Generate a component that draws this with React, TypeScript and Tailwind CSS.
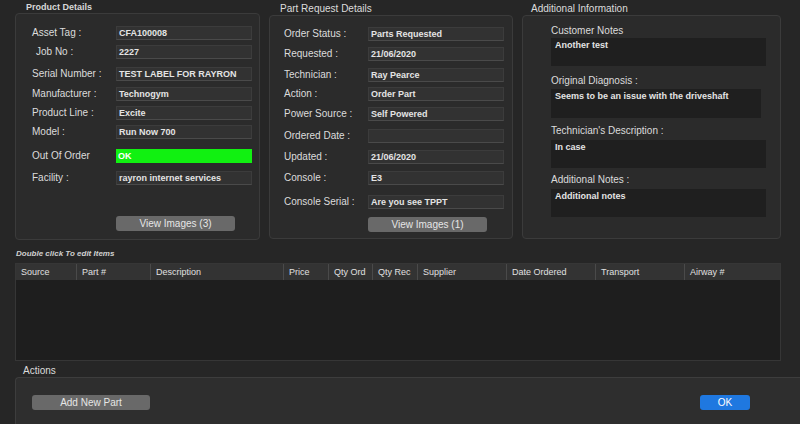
import React from "react";

type Row = { label: string; value: string; gap: string; indent?: boolean; green?: boolean };

const productRows: Row[] = [
  { label: "Asset Tag :", value: "CFA100008", gap: "mt-[12px]" },
  { label: "Job No :", value: "2227", gap: "mt-[5px]", indent: true },
  { label: "Serial Number :", value: "TEST LABEL FOR RAYRON", gap: "mt-[8px]" },
  { label: "Manufacturer :", value: "Technogym", gap: "mt-[6px]" },
  { label: "Product Line :", value: "Excite", gap: "mt-[5px]" },
  { label: "Model :", value: "Run Now 700", gap: "mt-[5px]" },
  { label: "Out Of Order", value: "OK", gap: "mt-[10px]", green: true },
  { label: "Facility :", value: "rayron internet services", gap: "mt-[8px]" },
];

const partRows: Row[] = [
  { label: "Order Status :", value: "Parts Requested", gap: "mt-[11px]" },
  { label: "Requested :", value: "21/06/2020", gap: "mt-[6px]" },
  { label: "Technician :", value: "Ray Pearce", gap: "mt-[7px]" },
  { label: "Action :", value: "Order Part", gap: "mt-[5px]" },
  { label: "Power Source :", value: "Self Powered", gap: "mt-[6px]" },
  { label: "Ordered Date :", value: "", gap: "mt-[8px]" },
  { label: "Updated :", value: "21/06/2020", gap: "mt-[7px]" },
  { label: "Console :", value: "E3", gap: "mt-[7px]" },
  { label: "Console Serial :", value: "Are you see TPPT", gap: "mt-[10px]" },
];

// gap above label, space between label and box, box size
const notes = [
  { label: "Customer Notes", value: "Another test", gap: "mt-[8px]", inner: "mt-[1px]", box: "w-[215px] h-[28px]" },
  { label: "Original Diagnosis :", value: "Seems to be an issue with the driveshaft", gap: "mt-[8px]", inner: "mt-[2px]", box: "w-[210px] h-[29px]" },
  { label: "Technician's Description :", value: "In case", gap: "mt-[6px]", inner: "mt-[3px]", box: "w-[215px] h-[28px]" },
  { label: "Additional Notes :", value: "Additional notes", gap: "mt-[5px]", inner: "mt-[3px]", box: "w-[215px] h-[28px]" },
];

const columns = [
  { name: "Source", w: "w-[61px]" },
  { name: "Part #", w: "w-[74px]" },
  { name: "Description", w: "w-[133px]" },
  { name: "Price", w: "w-[45px]" },
  { name: "Qty Ord", w: "w-[44px]" },
  { name: "Qty Rec", w: "w-[45px]" },
  { name: "Supplier", w: "w-[89px]" },
  { name: "Date Ordered", w: "w-[89px]" },
  { name: "Transport", w: "w-[89px]" },
  { name: "Airway #", w: "flex-1" },
];

const Field: React.FC<{ row: Row; labelW: string }> = ({ row, labelW }) => (
  <div className={`flex items-center h-[14px] ${row.gap}`}>
    <div className={`${labelW} shrink-0 text-[10px] text-[#dcdcdc] leading-none ${row.indent ? "pl-[4px]" : ""}`}>
      {row.label}
    </div>
    <div
      className={`w-[136px] h-[14px] px-[2px] flex items-center text-[9px] font-semibold leading-none ${
        row.green
          ? "bg-[#11f111] text-white"
          : "bg-[#323232] text-[#e4e4e4] border border-[#3c3c3c] border-b-[#4a4a4a]"
      }`}
    >
      {row.value}
    </div>
  </div>
);

const GrayButton: React.FC<{ label: string; w: string; className?: string }> = ({ label, w, className }) => (
  <button className={`${w} h-[15px] rounded-[3px] bg-[#696969] text-[10px] text-[#e6e6e6] leading-none ${className ?? ""}`}>
    {label}
  </button>
);

export default function App() {
  return (
    <div className="w-[800px] h-[424px] bg-[#262626] overflow-hidden font-['Liberation_Sans',Arial,sans-serif] flex flex-col">
      <div className="flex h-[240px] shrink-0">
        {/* Product Details */}
        <div className="ml-[15px] w-[245px] flex flex-col">
          <div className="h-[13px] pl-[11px] pt-[3px] text-[9px] font-semibold text-[#d8d8d8] leading-none">Product Details</div>
          <div className="h-[227px] bg-[#2b2b2b] border border-[#3b3b3b] rounded-[4px] pl-[16px] flex flex-col">
            {productRows.map((r) => (
              <Field key={r.label} row={r} labelW="w-[84px]" />
            ))}
            <GrayButton label="View Images (3)" w="w-[119px]" className="mt-[31px] ml-[84px]" />
          </div>
        </div>

        {/* Part Request Details */}
        <div className="ml-[9px] w-[244px] flex flex-col">
          <div className="h-[15px] pl-[11px] pt-[4px] text-[10px] text-[#dcdcdc] leading-none">Part Request Details</div>
          <div className="h-[224px] bg-[#2b2b2b] border border-[#3b3b3b] rounded-[4px] pl-[14px] flex flex-col">
            {partRows.map((r) => (
              <Field key={r.label} row={r} labelW="w-[84px]" />
            ))}
            <GrayButton label="View Images (1)" w="w-[119px]" className="mt-[8px] ml-[84px]" />
          </div>
        </div>

        {/* Additional Information */}
        <div className="ml-[9px] w-[259px] flex flex-col">
          <div className="h-[15px] pl-[9px] pt-[4px] text-[10px] text-[#dcdcdc] leading-none">Additional Information</div>
          <div className="h-[224px] bg-[#2b2b2b] border border-[#3b3b3b] rounded-[4px] pl-[28px] flex flex-col">
            {notes.map((n) => (
              <div key={n.label} className={`flex flex-col ${n.gap}`}>
                <div className="h-[13px] text-[10px] text-[#dcdcdc] leading-[13px]">{n.label}</div>
                <div className={`${n.box} ${n.inner} bg-[#1f1f1f] px-[4px] pt-[3px] text-[9px] font-semibold text-[#e4e4e4] leading-none`}>
                  {n.value}
                </div>
              </div>
            ))}
          </div>
        </div>
      </div>

      {/* Items table */}
      <div className="h-[23px] pl-[16px] pt-[10px] text-[8px] italic font-bold text-[#d0d0d0] leading-none">
        Double click To edit Items
      </div>
      <div className="ml-[15px] w-[766px] h-[98px] flex flex-col border border-[#363636]">
        <div className="h-[16px] bg-[#333333] flex">
          {columns.map((c, i) => (
            <div
              key={c.name}
              className={`${c.w} h-full flex items-center px-[5px] text-[9px] text-[#e0e0e0] leading-none ${
                i < columns.length - 1 ? "border-r border-[#4a4a4a]" : ""
              }`}
            >
              {c.name}
            </div>
          ))}
        </div>
        <div className="flex-1 bg-[#1e1e1e]" />
      </div>

      {/* Actions */}
      <div className="h-[16px] pl-[23px] pt-[5px] text-[10px] text-[#dcdcdc] leading-none">Actions</div>
      <div className="ml-[15px] flex-1 bg-[#2e2e2e] border-t border-l border-[#3d3d3d] rounded-tl-[4px] flex items-start pt-[17px] pl-[16px]">
        <GrayButton label="Add New Part" w="w-[118px]" />
        <button className="ml-[550px] w-[50px] h-[15px] rounded-[3px] bg-[#1f78e0] text-[10px] text-white leading-none">
          OK
        </button>
      </div>
    </div>
  );
}
